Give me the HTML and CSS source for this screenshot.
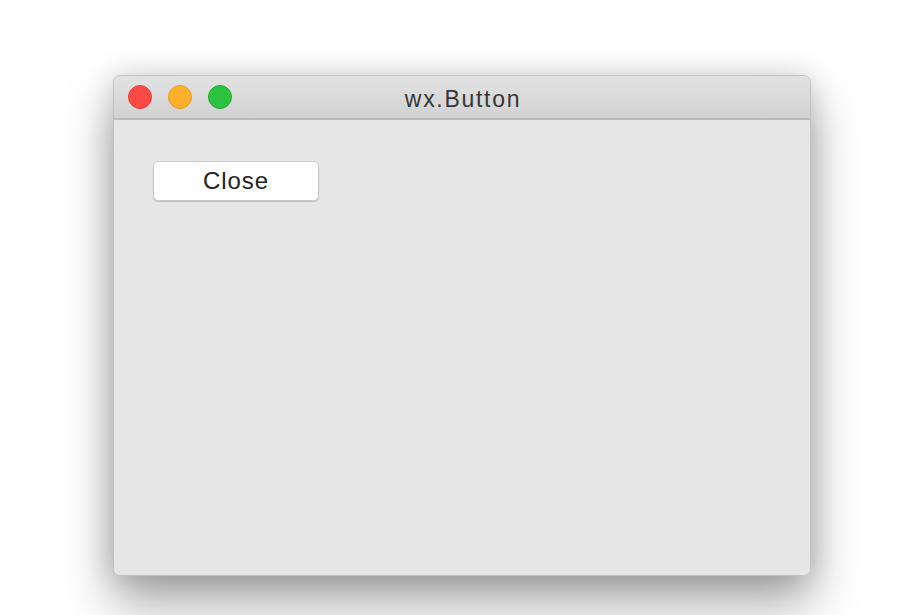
FILE: index.html
```html
<!DOCTYPE html>
<html>
<head>
<meta charset="utf-8">
<link rel="stylesheet" href="styles.css">
</head>
<body>
<div class="window">
  <div class="titlebar">
    <div class="lights">
      <span class="light red"></span>
      <span class="light yellow"></span>
      <span class="light green"></span>
    </div>
    <div class="title">wx.Button</div>
  </div>
  <div class="content">
    <button class="btn">Close</button>
  </div>
</div>
</body>
</html>
```
FILE: styles.css
```css
html, body {
  margin: 0;
  padding: 0;
  background: #ffffff;
  width: 924px;
  height: 615px;
  overflow: hidden;
}
.window {
  margin: 75px 0 0 113px;
  width: 698px;
  height: 501px;
  box-sizing: border-box;
  border: 1px solid #c2c2c2;
  border-radius: 7px;
  overflow: hidden;
  background: #e6e6e6;
  box-shadow: 0 26px 50px rgba(0,0,0,0.36), 0 0 28px rgba(0,0,0,0.14);
  display: flex;
  flex-direction: column;
  font-family: "Liberation Sans", Arial, sans-serif;
}
.titlebar {
  height: 44px;
  flex: none;
  box-sizing: border-box;
  background: linear-gradient(#e2e2e2, #d2d2d2);
  border-bottom: 2px solid #bcbcbc;
  display: flex;
  align-items: center;
  position: relative;
}
.lights {
  display: flex;
  gap: 16px;
  padding-left: 14px;
}
.light {
  width: 24px;
  height: 24px;
  border-radius: 50%;
  box-sizing: border-box;
}
.red { background: #fc4a45; border: 1px solid #e0403b; }
.yellow { background: #fdb02a; border: 1px solid #e09c25; }
.green { background: #2bc33f; border: 1px solid #23a834; }
.title {
  position: absolute;
  left: 0;
  right: 0;
  text-align: center;
  font-size: 23px;
  letter-spacing: 1.7px;
  color: #363636;
  top: 10px;
  padding-left: 2px;
}
.content {
  flex: 1;
  padding: 41px 0 0 39px;
  background: #e6e6e6;
}
.btn {
  width: 166px;
  height: 40px;
  background: #ffffff;
  border: 1px solid #c8c8c8;
  border-radius: 5px;
  box-shadow: 0 1px 1px rgba(0,0,0,0.18);
  font-family: "Liberation Sans", Arial, sans-serif;
  font-size: 24px;
  letter-spacing: 0.9px;
  color: #222;
  padding: 0 0 0 0;
  display: block;
}
```
